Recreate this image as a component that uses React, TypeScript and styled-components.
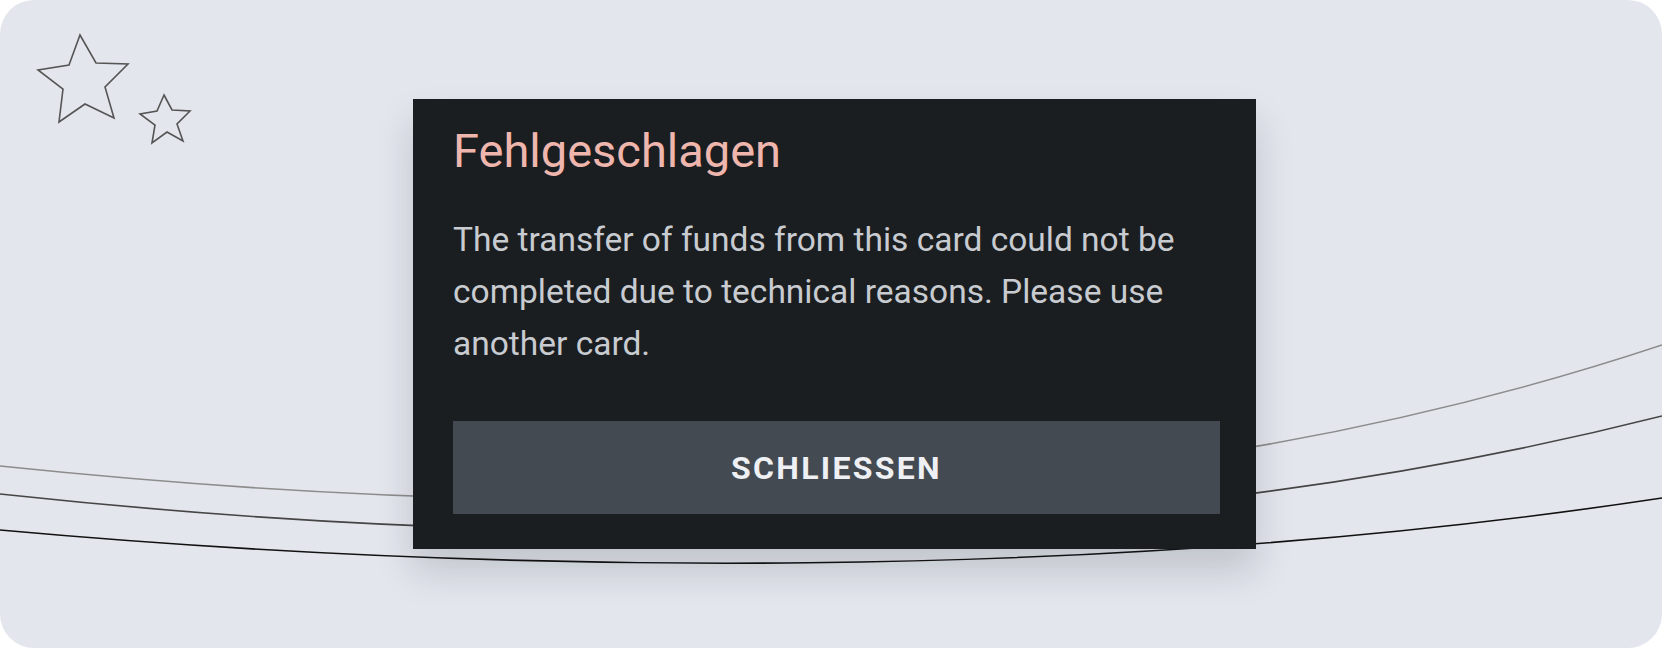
import styled, { createGlobalStyle } from "styled-components";

const GlobalStyle = createGlobalStyle`
  html, body {
    margin: 0;
    padding: 0;
    background: #ffffff;
  }
  * {
    box-sizing: border-box;
  }
`;

const Frame = styled.div`
  position: relative;
  width: 1662px;
  height: 648px;
  border-radius: 34px;
  overflow: hidden;
  background: #e3e6ed;
  display: flex;
  align-items: flex-start;
  padding: 99px 0 0 413px;
  font-family: Roboto, "Liberation Sans", sans-serif;
`;

const Backdrop = styled.svg`
  position: absolute;
  inset: 0;
  width: 100%;
  height: 100%;
  z-index: 0;
`;

const Dialog = styled.div`
  position: relative;
  z-index: 1;
  width: 843px;
  height: 450px;
  background: #1b1e21;
  padding: 24px 36px 35px 40px;
  display: flex;
  flex-direction: column;
  box-shadow: 0 22px 36px rgba(20, 24, 32, 0.16);
`;

const Title = styled.h2`
  margin: 0;
  font-size: 47px;
  line-height: 56px;
  font-weight: 400;
  color: #efb6ad;
`;

const Message = styled.p`
  margin: 35px 0 0;
  font-size: 33.5px;
  line-height: 52px;
  color: #c8cbd0;
`;

const CloseButton = styled.button`
  margin-top: auto;
  height: 93px;
  width: 100%;
  border: none;
  background: #434a52;
  color: #eef0f3;
  font-family: inherit;
  font-size: 32px;
  font-weight: 700;
  letter-spacing: 2.3px;
  cursor: pointer;
`;

// curved strokes sweeping across the backdrop, plus the two outline stars
const curves = [
  { d: "M0 466 C 500 518, 1100 532, 1662 345", color: "#8c8c8c" },
  { d: "M0 494 C 500 548, 1100 558, 1662 416", color: "#454545" },
  { d: "M0 530 C 500 575, 1100 583, 1662 498", color: "#111111" },
];

const stars = [
  "80,35 96,63 128,64 105,87 114,118 85,104 59,122 63,89 38,70 69,65",
  "164,95 172,110 190,111 177,124 183,141 167,132 152,143 155,125 140,114 157,111",
];

export default function App() {
  return (
    <>
      <GlobalStyle />
      <Frame>
        <Backdrop viewBox="0 0 1662 648" preserveAspectRatio="none">
          {curves.map((c) => (
            <path key={c.d} d={c.d} fill="none" stroke={c.color} strokeWidth={1.6} />
          ))}
          {stars.map((p) => (
            <polygon key={p} points={p} fill="none" stroke="#555" strokeWidth={1.6} strokeLinejoin="miter" />
          ))}
        </Backdrop>
        <Dialog>
          <Title>Fehlgeschlagen</Title>
          <Message>
            The transfer of funds from this card could not be completed due to technical reasons. Please use another card.
          </Message>
          <CloseButton>SCHLIESSEN</CloseButton>
        </Dialog>
      </Frame>
    </>
  );
}
